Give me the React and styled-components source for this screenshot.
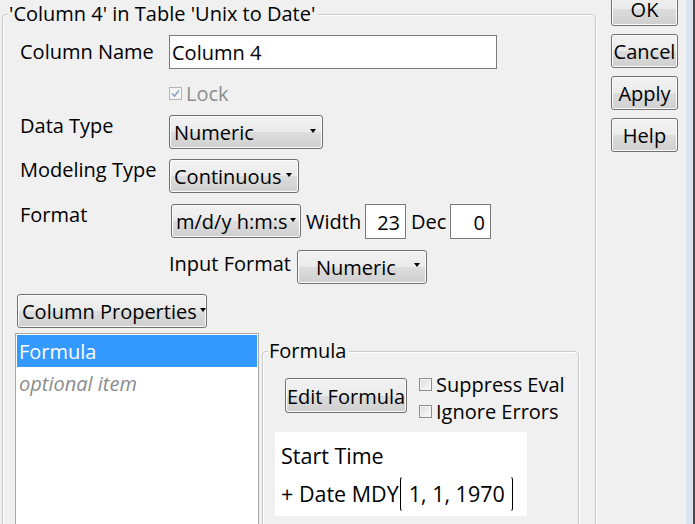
import styled, { createGlobalStyle } from "styled-components";

const GlobalStyle = createGlobalStyle`
  html, body {
    margin: 0;
    padding: 0;
    background: #f0f0f0;
    overflow: hidden;
  }
  body {
    font-family: "Segoe UI", "Open Sans", "Noto Sans", sans-serif;
    font-size: 20px;
    color: #000;
  }
`;

const Window = styled.div`
  width: 695px;
  height: 524px;
  display: flex;
  overflow: hidden;
  background: #f0f0f0;
`;

const GroupBox = styled.div`
  position: relative;
  box-sizing: border-box;
  flex: none;
  width: ${(p) => p.$w}px;
  height: ${(p) => p.$h}px;
  margin: ${(p) => p.$m};
  border: 1px solid #c9c9c9;
  border-radius: 4px;
  box-shadow: inset 1px 1px 0 #fff, 1px 1px 0 #fff;
  padding: ${(p) => p.$pad};
`;

const Legend = styled.span`
  position: absolute;
  left: 5px;
  top: -14px;
  padding: 0 3px 0 1px;
  background: #f0f0f0;
  line-height: 26px;
  white-space: nowrap;
`;

const Row = styled.div`
  display: flex;
  align-items: ${(p) => p.$align || "center"};
  height: ${(p) => p.$h || 34}px;
  margin-top: ${(p) => p.$mt}px;
  margin-left: ${(p) => p.$ml || 0}px;
  padding-left: ${(p) => p.$pl || 0}px;
`;

const Label = styled.div`
  width: ${(p) => p.$w || 149}px;
  flex: none;
  line-height: 28px;
  margin-top: ${(p) => p.$mt || 0}px;
  padding-left: ${(p) => p.$pl || 0}px;
  box-sizing: border-box;
  white-space: nowrap;
`;

const TextBox = styled.div`
  box-sizing: border-box;
  width: ${(p) => p.$w}px;
  height: ${(p) => p.$h || 34}px;
  background: #fff;
  border: 1px solid #7a7a7a;
  padding: 1px ${(p) => (p.$right ? 5 : 2)}px 0;
  display: flex;
  align-items: center;
  justify-content: ${(p) => (p.$right ? "flex-end" : "flex-start")};
  white-space: nowrap;
  flex: none;
`;

const ButtonFace = styled.div`
  box-sizing: border-box;
  height: 34px;
  border: 1px solid #707070;
  border-radius: 3px;
  background: linear-gradient(#f2f2f2 0%, #ebebeb 50%, #dddddd 51%, #cfcfcf 100%);
  box-shadow: inset 0 0 0 1px #fcfcfc;
  display: flex;
  align-items: center;
  padding-top: 1px;
  white-space: nowrap;
  flex: none;
`;

const Dropdown = styled(ButtonFace)`
  width: ${(p) => p.$w}px;
  margin-left: ${(p) => p.$ml || 0}px;
  padding: 1px 6px 0 ${(p) => p.$pl || 4}px;
  justify-content: space-between;
`;

const Arrow = styled.span`
  width: 0;
  height: 0;
  border-left: 3.5px solid transparent;
  border-right: 3.5px solid transparent;
  border-top: 4px solid #000;
  margin-top: -4px;
  margin-left: 3px;
  flex: none;
`;

const PushButton = styled(ButtonFace)`
  width: ${(p) => p.$w}px;
  justify-content: center;
  height: ${(p) => p.$h || 34}px;
`;

const ButtonColumn = styled.div`
  display: flex;
  flex-direction: column;
  gap: 8px;
  margin: -8px 0 0 15px;
  flex: none;
`;

const EdgeStrip = styled.div`
  margin-left: 8px;
  width: 7px;
  height: 524px;
  background: #dbe5f1;
  border-right: 3px solid #4a4a4a;
  flex: none;
`;

const Check = styled.span`
  box-sizing: border-box;
  width: 13px;
  height: 13px;
  border: 1px solid ${(p) => (p.$disabled ? "#b5b5b5" : "#8e8f8f")};
  background: ${(p) =>
    p.$disabled ? "#f4f4f4" : "linear-gradient(135deg, #dcdcdc, #fbfbfb)"};
  box-shadow: inset 0 0 0 1px #f4f4f4;
  display: inline-flex;
  align-items: center;
  justify-content: center;
  flex: none;
`;

const CheckRow = styled.div`
  display: flex;
  align-items: center;
  gap: 4px;
  height: 30px;
  color: ${(p) => (p.$disabled ? "#8d8d8d" : "#000")};
`;

const Lower = styled.div`
  display: flex;
  margin-top: 5px;
  margin-left: -5px;
  gap: 3px;
`;

const ListBox = styled.div`
  box-sizing: border-box;
  width: 244px;
  height: 220px;
  background: #fff;
  border: 1px solid #a9a9a9;
  padding: 1px;
  flex: none;
`;

const ListItem = styled.div`
  height: 32px;
  line-height: 33px;
  padding-left: 2px;
  background: ${(p) => (p.$selected ? "#3399ff" : "transparent")};
  color: ${(p) => (p.$selected ? "#fff" : "#8c8c8c")};
  font-style: ${(p) => (p.$italic ? "italic" : "normal")};
`;

const FormulaTop = styled.div`
  display: flex;
  gap: 12px;
  height: 35px;
`;

const Checks = styled.div`
  display: flex;
  flex-direction: column;
  margin-top: -7px;
`;

const FormulaView = styled.div`
  width: 252px;
  height: 84px;
  margin: 19px 0 0 12px;
  background: #fff;
  box-sizing: border-box;
  padding: 9px 6px;
  line-height: 30px;
  font-size: 21.5px;
`;

const MathLine = styled.div`
  display: flex;
  align-items: center;
  height: 38px;
  margin-top: 4px;
  white-space: pre;
`;

const Paren = styled.span`
  width: 4px;
  height: 36px;
  box-sizing: border-box;
  border: 1.5px solid #000;
  border-${(p) => (p.$right ? "left" : "right")}: none;
  border-radius: ${(p) => (p.$right ? "0 6px 6px 0" : "6px 0 0 6px")};
  margin: ${(p) => (p.$right ? "0 0 0 4px" : "0 5px 0 1px")};
  border-top-color: transparent;
  border-bottom-color: transparent;
`;

function Checkbox({ checked, disabled }) {
  return (
    <Check $disabled={disabled}>
      {checked && (
        <svg width="9" height="9" viewBox="0 0 9 9">
          <path d="M1 4.5 L3.5 7 L8 1.5" fill="none" stroke="#8da2c0" strokeWidth="1.6" />
        </svg>
      )}
    </Check>
  );
}

export default function App() {
  return (
    <>
      <GlobalStyle />
      <Window>
        <GroupBox $w={594} $h={560} $m="14px 0 0 2px" $pad="20px 0 0 17px">
          <Legend>'Column 4' in Table 'Unix to Date'</Legend>
          <Row $mt={0}>
            <Label>Column Name</Label>
            <TextBox $w={328}>Column 4</TextBox>
          </Row>
          <Row $mt={14} $h={20} $pl={149}>
            <CheckRow $disabled>
              <Checkbox checked disabled />
              Lock
            </CheckRow>
          </Row>
          <Row $mt={12} $align="flex-start">
            <Label $mt={-3}>Data Type</Label>
            <Dropdown $w={154}>
              Numeric
              <Arrow />
            </Dropdown>
          </Row>
          <Row $mt={10} $align="flex-start">
            <Label $mt={-3}>Modeling Type</Label>
            <Dropdown $w={130}>
              Continuous
              <Arrow />
            </Dropdown>
          </Row>
          <Row $mt={11} $h={35} $align="flex-start">
            <Label $mt={-3}>Format</Label>
            <Dropdown $w={130} $ml={2}>
              m/d/y h:m:s
              <Arrow />
            </Dropdown>
            <Label $w={64} $mt={4} $pl={5}>Width</Label>
            <TextBox $w={41} $h={35} $right>23</TextBox>
            <Label $w={44} $mt={4} $pl={5}>Dec</Label>
            <TextBox $w={41} $h={35} $right>0</TextBox>
          </Row>
          <Row $mt={10} $h={35} $pl={149}>
            <Label $w={128} $mt={-6}>Input Format</Label>
            <Dropdown $w={130} $pl={18}>
              Numeric
              <Arrow />
            </Dropdown>
          </Row>
          <Row $mt={10} $ml={-3}>
            <Dropdown $w={190}>
              Column Properties
              <Arrow />
            </Dropdown>
          </Row>
          <Lower>
            <ListBox>
              <ListItem $selected>Formula</ListItem>
              <ListItem $italic>optional item</ListItem>
            </ListBox>
            <GroupBox $w={317} $h={200} $m="18px 0 0 0" $pad="26px 0 0 0">
              <Legend>Formula</Legend>
              <FormulaTop>
                <PushButton $w={122} $h={35} style={{ marginLeft: 22 }}>
                  Edit Formula
                </PushButton>
                <Checks>
                  <CheckRow>
                    <Checkbox />
                    Suppress Eval
                  </CheckRow>
                  <CheckRow>
                    <Checkbox />
                    Ignore Errors
                  </CheckRow>
                </Checks>
              </FormulaTop>
              <FormulaView>
                <div>Start Time</div>
                <MathLine>
                  + Date MDY
                  <Paren />
                  1, 1, 1970
                  <Paren $right />
                </MathLine>
              </FormulaView>
            </GroupBox>
          </Lower>
        </GroupBox>
        <ButtonColumn>
          <PushButton $w={67}>OK</PushButton>
          <PushButton $w={67}>Cancel</PushButton>
          <PushButton $w={67}>Apply</PushButton>
          <PushButton $w={67}>Help</PushButton>
        </ButtonColumn>
        <EdgeStrip />
      </Window>
    </>
  );
}
